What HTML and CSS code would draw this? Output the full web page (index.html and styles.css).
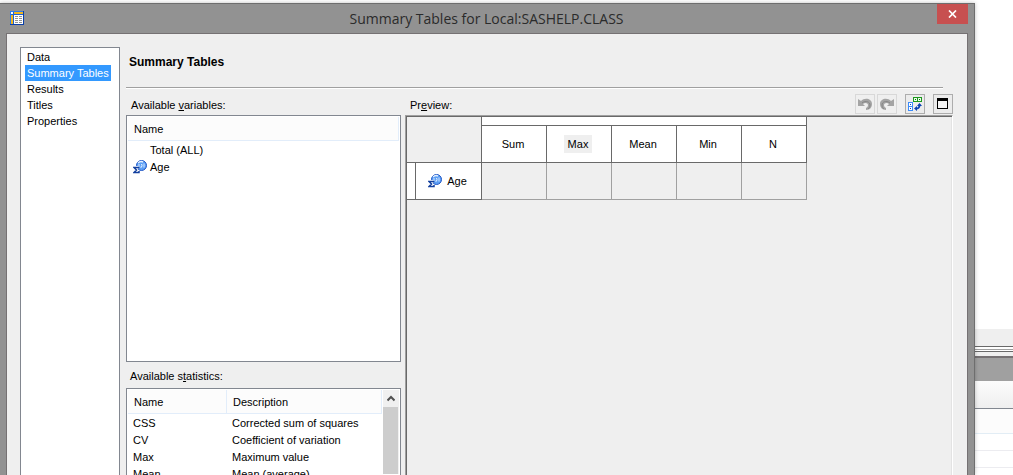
FILE: index.html
```html
<!DOCTYPE html>
<html lang="en">
<head>
  <meta charset="utf-8">
  <title>Summary Tables for Local:SASHELP.CLASS</title>
  <link rel="stylesheet" href="styles.css">
</head>
<body>

  <!-- shared icon: numeric variable -->
  <svg class="symbols" width="0" height="0" aria-hidden="true">
    <symbol id="numeric" viewBox="0 0 14 14">
      <circle cx="8.500" cy="5.500" r="5" fill="#5c9ff5" stroke="#1f55c4"/>
      <path d="M5 3c1-1 3-2 5-1" fill="none" stroke="#e4f1ff" stroke-width="1.5"/>
      <path d="M6 4v3M8 4.500h1v2H8v1.500M11 3.500v4" fill="none" stroke="#d4e7ff"/>
      <path d="M5.500 7.500H1l2.500 2.500L1 12.500h5" fill="none" stroke="#fff" stroke-width="3"/>
      <path d="M5.500 8.500v-1H1l2.500 2.500L1 12.500h5v-1.500" fill="none" stroke="#123f9e" stroke-width="1.500"/>
    </symbol>
  </svg>

  <div class="dialog">
    <header class="titlebar">
      <svg class="app-icon" viewBox="0 0 14 14" shape-rendering="crispEdges" aria-hidden="true">
        <rect width="14" height="14" fill="#0a3fa8"/>
        <rect width="13" height="1" fill="#2f7bea"/>
        <rect width="1" height="13" fill="#2f7bea"/>
        <rect x="1" y="1" width="12" height="12" fill="#1c62d6"/>
        <rect x="1" y="1" width="2" height="2" fill="#fff"/>
        <rect x="4" y="1" width="9" height="2" fill="#f3b71b"/>
        <rect x="1" y="4" width="2" height="9" fill="#f3b71b"/>
        <rect x="4" y="4" width="9" height="9" fill="#fff"/>
        <path d="M5 5.500h3m1 0h3M5 7.500h3m1 0h3M5 9.500h3m1 0h3M5 11.500h3m1 0h3" stroke="#929292"/>
      </svg>
      <span class="caption">Summary Tables for Local:SASHELP.CLASS</span>
      <button class="close" aria-label="Close">
        <svg width="9" height="8" viewBox="0 0 9 8"><path d="M1 .5l7 7M8 .5l-7 7" stroke="#fff" stroke-width="1.700"/></svg>
      </button>
    </header>

    <div class="client">
      <nav class="pages">
        <a href="#">Data</a>
        <a href="#" class="selected">Summary Tables</a>
        <a href="#">Results</a>
        <a href="#">Titles</a>
        <a href="#">Properties</a>
      </nav>

      <main class="page">
        <h1>Summary Tables</h1>

        <div class="columns">
          <section class="lists">
            <h2 id="variables-label">Available <u>v</u>ariables:</h2>
            <div class="listbox variables">
              <table aria-labelledby="variables-label">
                <thead>
                  <tr><th>Name</th></tr>
                </thead>
                <tbody>
                  <tr><td><span class="variable">Total (ALL)</span></td></tr>
                  <tr><td><span class="variable with-icon"><svg class="numeric"><use href="#numeric"/></svg>Age</span></td></tr>
                </tbody>
              </table>
            </div>

            <h2 class="second-label" id="statistics-label">Available s<u>t</u>atistics:</h2>
            <div class="listbox statistics">
              <table aria-labelledby="statistics-label">
                <thead>
                  <tr><th class="stat-name">Name</th><th>Description</th></tr>
                </thead>
                <tbody>
                  <tr><td>CSS</td><td>Corrected sum of squares</td></tr>
                  <tr><td>CV</td><td>Coefficient of variation</td></tr>
                  <tr><td>Max</td><td>Maximum value</td></tr>
                  <tr><td>Mean</td><td>Mean (average)</td></tr>
                </tbody>
              </table>
              <div class="scrollbar">
                <button aria-label="Scroll up">
                  <svg width="8" height="7" viewBox="0 0 8 7"><path d="M.5 5.500L4 2l3.500 3.500" fill="none" stroke="#505050" stroke-width="2"/></svg>
                </button>
                <div class="thumb"></div>
              </div>
            </div>
          </section>

          <section class="preview">
            <div class="preview-head">
              <h2 id="preview-label">Pr<u>e</u>view:</h2>
              <div class="tools">
                <button class="tool" disabled aria-label="Undo">
                  <svg width="14" height="12" viewBox="0 0 14 12">
                    <path d="M0 1v7h7L5 6c2-2 5-1 5 1 0 1.500-1 2.500-2 3v2c4 0 6-3 6-6 0-5-7-7-11-3z" fill="#a4a4a4"/>
                    <path d="M4 5c4-3 8-1 8 2 0 2-1 3-2 4" fill="none" stroke="#858585"/>
                  </svg>
                </button>
                <button class="tool" disabled aria-label="Redo">
                  <svg width="14" height="12" viewBox="0 0 14 12">
                    <path d="M14 1v7H7l2-2C7 4 4 5 4 7c0 1.500 1 2.500 2 3v2C2 12 0 9 0 6c0-5 7-7 11-3z" fill="#a4a4a4"/>
                    <path d="M10 5C6 2 2 4 2 7c0 2 1 3 2 4" fill="none" stroke="#858585"/>
                  </svg>
                </button>
                <button class="tool pivot" aria-label="Pivot table">
                  <svg width="14" height="14" viewBox="0 0 14 14">
                    <g shape-rendering="crispEdges">
                      <rect x="5" y="0" width="9" height="5" fill="#1c961c"/>
                      <rect x="6" y="1" width="3" height="3" fill="#e8ffe8"/>
                      <rect x="10" y="1" width="3" height="3" fill="#e8ffe8"/>
                      <rect x="7" y="2" width="1" height="1" fill="#0a6a0a"/>
                      <rect x="11" y="2" width="1" height="1" fill="#0a6a0a"/>
                      <rect x="0" y="5" width="5" height="9" fill="#3b8bfa"/>
                      <rect x="1" y="6" width="3" height="3" fill="#fff"/>
                      <rect x="1" y="10" width="3" height="3" fill="#fff"/>
                      <rect x="2" y="7" width="1" height="1" fill="#0a44b5"/>
                      <rect x="2" y="11" width="1" height="1" fill="#0a44b5"/>
                    </g>
                    <path d="M8 11.500c3 0 3.500-1 3.500-4" fill="none" stroke="#0b42b4" stroke-width="2"/>
                    <path d="M9 9l2.500-3L14 9zM9 9v5l-3-2.500z" fill="#0b42b4"/>
                  </svg>
                </button>
                <button class="tool maximize" aria-label="Maximize preview">
                  <svg width="12" height="12" viewBox="0 0 12 12" shape-rendering="crispEdges">
                    <rect width="11" height="11"/>
                    <rect x="1" y="3" width="9" height="7" fill="#f4f4f4"/>
                  </svg>
                </button>
              </div>
            </div>

            <div class="canvas">
              <table aria-labelledby="preview-label">
                <tr class="strip">
                  <td class="corner" colspan="2" rowspan="2"></td>
                  <th colspan="5"></th>
                </tr>
                <tr>
                  <th>Sum</th>
                  <th><span class="hot">Max</span></th>
                  <th>Mean</th>
                  <th>Min</th>
                  <th>N</th>
                </tr>
                <tr>
                  <th class="edge"></th>
                  <th class="row-head"><span class="with-icon"><svg class="numeric"><use href="#numeric"/></svg>Age</span></th>
                  <td></td>
                  <td></td>
                  <td></td>
                  <td></td>
                  <td></td>
                </tr>
              </table>
            </div>
          </section>
        </div>
      </main>
    </div>
  </div>

  <!-- the part of the main window that shows beside the dialog -->
  <div class="behind">
    <div class="blank"></div>
    <div class="status"></div>
    <div class="splitter"></div>
    <div class="band"></div>
    <div class="toolbar"></div>
    <div class="grid-head"></div>
    <div class="grid-row"></div>
    <div class="grid-row"></div>
    <div class="grid-row"></div>
  </div>

</body>
</html>
```
FILE: styles.css
```css
* {
  box-sizing: border-box;
}

body {
  margin: 0;
  height: 100vh;
  display: flex;
  overflow: hidden;
  background: #fff;
  color: #000;
  font: 11px/16px "Liberation Sans", Arial, sans-serif;
}

button {
  padding: 0;
  border: 0;
  display: flex;
  align-items: center;
  justify-content: center;
}

h1, h2 {
  margin: 0;
  font-size: inherit;
}

h2 {
  font-weight: normal;
}

table {
  border-collapse: separate;
  border-spacing: 0;
}

th, td {
  padding: 0;
  font-weight: normal;
}

.symbols {
  position: absolute;
}

/* dialog frame */
.dialog {
  flex: 1;
  min-width: 0;
  margin-top: 3px;
  padding: 0 6px;
  display: flex;
  flex-direction: column;
  border-top: 1px solid #6e6e6e;
  border-right: 1px solid #6e6e6e;
  background: #929292;
  box-shadow: 0 0 4px rgba(0, 0, 0, 0.25);
  z-index: 1;
}

.titlebar {
  height: 29px;
  flex: none;
  display: flex;
  align-items: flex-start;
  padding-left: 4px;
}

.app-icon {
  width: 14px;
  height: 14px;
  margin-top: 7px;
}

.caption {
  flex: 1;
  padding: 5px 0 0 12px;
  text-align: center;
  color: #2b2b2b;
  font: 14px/20px "Open Sans", "Noto Sans", sans-serif;
}

.close {
  width: 31px;
  height: 20px;
  background: #c75050;
}

.client {
  flex: 1;
  min-height: 0;
  display: flex;
  gap: 6px;
  padding: 13px 14px 0 13px;
  border: 1px solid #757173;
  border-bottom: 0;
  background: #efefef;
}

/* page list */
.pages {
  width: 100px;
  flex: none;
  display: flex;
  flex-direction: column;
  align-items: flex-start;
  padding: 1px 4px;
  border: 1px solid #828790;
  border-bottom: 0;
  background: #fff;
}

.pages a {
  padding: 0 2px;
  color: #000;
  text-decoration: none;
  white-space: nowrap;
}

.pages .selected {
  background: #3399ff;
  color: #fff;
}

.page {
  flex: 1;
  min-width: 0;
  display: flex;
  flex-direction: column;
}

h1 {
  height: 42px;
  flex: none;
  margin-right: 10px;
  padding: 7px 3px 0;
  border-bottom: 1px solid #fff;
  box-shadow: inset 0 -1px #a0a0a0;
  font-size: 12px;
}

.columns {
  flex: 1;
  min-height: 0;
  display: flex;
  gap: 4px;
}

h2 {
  height: 26px;
  flex: none;
  padding: 8px 5px 0;
}

/* left column */
.lists {
  width: 275px;
  flex: none;
  display: flex;
  flex-direction: column;
}

.second-label {
  padding: 6px 4px 0;
}

.listbox {
  display: flex;
  align-items: flex-start;
  padding: 1px;
  border: 1px solid #828790;
  background: #fff;
  overflow: hidden;
}

.variables {
  height: 247px;
  flex: none;
}

.statistics {
  flex: 1;
  min-height: 0;
  border-bottom: 0;
}

.listbox table {
  flex: 1;
}

.listbox th {
  height: 24px;
  padding-left: 6px;
  border-right: 1px solid #e2edfa;
  border-bottom: 1px solid #e2edfa;
  background: #fcfcfc;
  text-align: left;
}

.listbox td {
  height: 17px;
  padding-left: 5px;
}

.stat-name {
  width: 99px;
}

.variable {
  display: block;
  padding-left: 17px;
}

.numeric {
  width: 14px;
  height: 14px;
}

.with-icon {
  display: flex;
  align-items: center;
  gap: 3px;
}

.variable.with-icon {
  padding-left: 0;
}

.scrollbar {
  width: 16px;
  align-self: stretch;
  display: flex;
  flex-direction: column;
  margin-left: 1px;
  background: #f0f0f0;
}

.scrollbar button {
  height: 17px;
  background: #f0f0f0;
}

.thumb {
  flex: 1;
  margin-right: 1px;
  background: #cdcdcd;
}

/* preview */
.preview {
  flex: 1;
  min-width: 0;
  display: flex;
  flex-direction: column;
}

.preview-head {
  display: flex;
  justify-content: space-between;
}

.tools {
  display: flex;
  gap: 2px;
  padding-top: 5px;
}

.tool {
  width: 20px;
  height: 20px;
  border: 1px solid #adadad;
  background: #ececec;
}

.tool:disabled {
  border-color: #d8d8d8;
  background: #efefef;
}

.pivot {
  margin: 0 6px;
}

.canvas {
  flex: 1;
  min-height: 0;
  border-top: 1px solid #a0a0a0;
  border-left: 1px solid #a0a0a0;
  border-right: 1px solid #fff;
  box-shadow: inset 1px 1px #696969, inset -1px 0 #e3e3e3;
  padding: 1px;
}

.canvas th, .canvas td {
  width: 65px;
  height: 37px;
  padding-right: 2px;
  border-right: 1px solid #a0a0a0;
  border-bottom: 1px solid #a0a0a0;
  text-align: center;
}

.canvas th, .canvas .corner {
  border-color: #696969;
}

.canvas th {
  background: #fff;
}

.canvas .strip th {
  height: 9px;
}

.canvas .edge {
  width: 9px;
}

.canvas .row-head {
  width: 66px;
}

.canvas .with-icon {
  justify-content: center;
  gap: 5px;
}

.hot {
  display: inline-block;
  padding: 1px 4px;
  background: #efefef;
}

/* window behind */
.behind {
  width: 38px;
  flex: none;
}

.blank {
  height: 329px;
}

.status {
  height: 17px;
  background: #efefef;
}

.splitter {
  height: 6px;
  border-top: 1px solid #696969;
  border-bottom: 1px solid #696969;
  background: linear-gradient(#fff 2px, #a0a0a0 2px, #a0a0a0 3px, #fff 3px);
}

.band {
  height: 29px;
  border-top: 4px solid #efefef;
  background: #a0a0a0;
  box-shadow: inset 0 2px #757173;
}

.toolbar {
  height: 28px;
  border-bottom: 1px solid #828790;
  background: linear-gradient(#fcfcfc, #efefef);
}

.grid-head {
  height: 25px;
  border-bottom: 1px solid #e2edf5;
  background: #fcfcfc;
}

.grid-row {
  height: 17px;
  border-bottom: 1px solid #ececf0;
}
```
